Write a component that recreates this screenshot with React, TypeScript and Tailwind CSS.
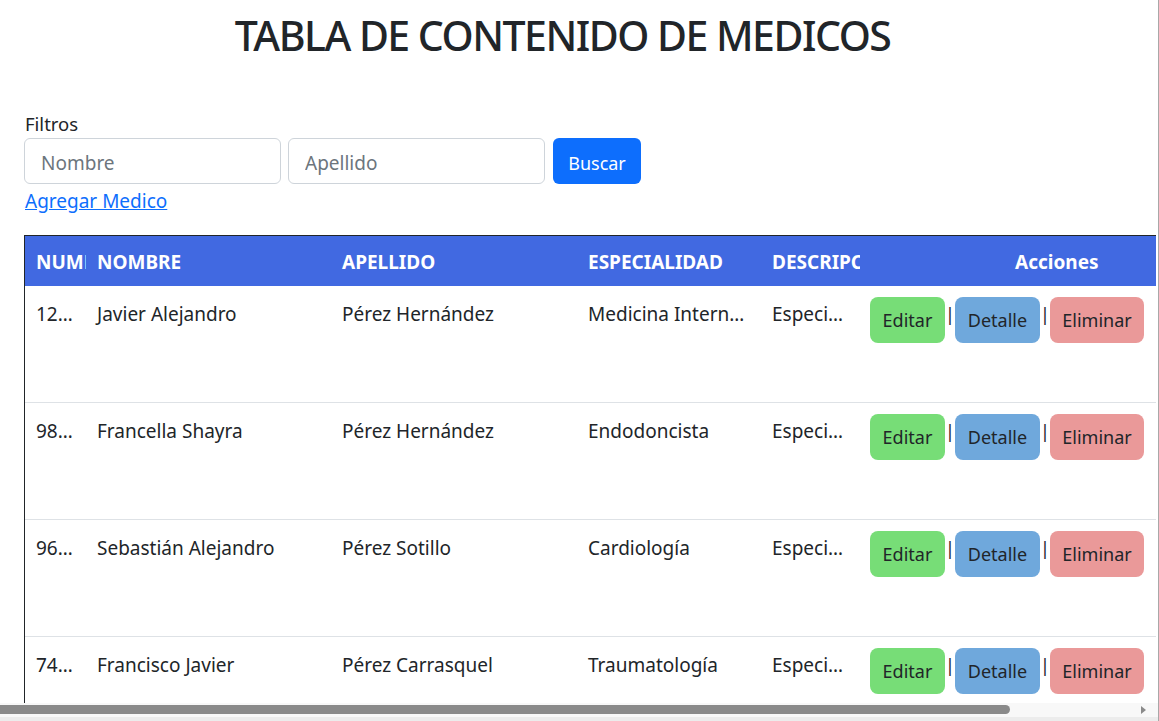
import React from 'react';

interface Medico {
  numero: string;
  nombre: string;
  apellido: string;
  especialidad: string;
  descripcion: string;
}

const MEDICOS: Medico[] = [
  { numero: '12345678', nombre: 'Javier Alejandro', apellido: 'Pérez Hernández', especialidad: 'Medicina Interna General', descripcion: 'Especialista en medicina interna' },
  { numero: '98765432', nombre: 'Francella Shayra', apellido: 'Pérez Hernández', especialidad: 'Endodoncista', descripcion: 'Especialista en endodoncia' },
  { numero: '96325874', nombre: 'Sebastián Alejandro', apellido: 'Pérez Sotillo', especialidad: 'Cardiología', descripcion: 'Especialista en cardiología' },
  { numero: '74125896', nombre: 'Francisco Javier', apellido: 'Pérez Carrasquel', especialidad: 'Traumatología', descripcion: 'Especialista en traumatología' },
];

const font = { fontFamily: '"Noto Sans", "Open Sans", sans-serif' };

export default function App() {
  return (
    <div className="relative w-[1159px] h-[721px] overflow-hidden bg-white border-r border-[#a8a8a8] text-[#212529]" style={font}>
      <div className="w-[1156px] h-[703px] overflow-hidden">
        {/* Title */}
        <h1 className="w-[1125px] pt-[9px] text-center text-[41px] leading-[52px] font-medium tracking-[-1.5px]">
          TABLA DE CONTENIDO DE MEDICOS
        </h1>

        {/* Filters */}
        <div className="pl-[24px] mt-[49px]">
          <div className="text-[18.5px] leading-[26px] pl-px pt-px h-[26px]">Filtros</div>
          <div className="flex items-center gap-[7px] mt-[2px]">
            <input
              type="text"
              placeholder="Nombre"
              className="w-[257px] h-[46px] rounded-[6px] border border-[#ced4da] px-[16px] pt-[4px] text-[19px] placeholder-[#6c757d] outline-none"
            />
            <input
              type="text"
              placeholder="Apellido"
              className="w-[257px] h-[46px] rounded-[6px] border border-[#ced4da] px-[16px] pt-[4px] text-[19px] placeholder-[#6c757d] outline-none"
            />
            <button className="ml-px w-[88px] h-[46px] rounded-[6px] bg-[#0d6efd] text-white text-[18px] pt-[4px]">
              Buscar
            </button>
          </div>
          <a href="#" className="inline-block mt-[4px] pl-px text-[19px] leading-[26px] text-[#0d6efd] underline">
            Agregar Medico
          </a>
        </div>

        {/* Table */}
        <div className="ml-[24px] mt-[21px] w-[1240px] border-t border-l border-[#212529]">
          <div className="flex h-[50px] items-center pt-[2px] bg-[#4169e1] text-white font-bold text-[19px] whitespace-nowrap">
            <div className="w-[61px] pl-[11px] overflow-hidden">NUMERO</div>
            <div className="w-[245px] pl-[11px] overflow-hidden">NOMBRE</div>
            <div className="w-[246px] pl-[11px] overflow-hidden">APELLIDO</div>
            <div className="w-[184px] pl-[11px] overflow-hidden">ESPECIALIDAD</div>
            <div className="w-[99px] pl-[11px] overflow-hidden">DESCRIPCION</div>
            <div className="pl-[155px]">Acciones</div>
          </div>
          {MEDICOS.map((m) => (
            <div key={m.numero} className="flex h-[117px] border-b border-[#dee2e6] text-[19px] leading-[26px]">
              <div className="w-[61px] px-[11px] pt-[15px] truncate">{m.numero}</div>
              <div className="w-[245px] px-[11px] pt-[15px] truncate">{m.nombre}</div>
              <div className="w-[246px] px-[11px] pt-[15px] truncate">{m.apellido}</div>
              <div className="w-[184px] px-[11px] pt-[15px] truncate">{m.especialidad}</div>
              <div className="w-[99px] px-[11px] pt-[15px] truncate">{m.descripcion}</div>
              <div className="flex items-start pt-[11px] pl-[10px] text-[#212529]">
                <button className="h-[46px] w-[75px] rounded-[8px] bg-[#77dd77] text-[18px]">Editar</button>
                <span className="w-[10px] mt-[5px] text-center text-[18px] leading-[24px] text-[#1a1a2e]">|</span>
                <button className="h-[46px] w-[85px] rounded-[8px] bg-[#6fa8dc] text-[18px]">Detalle</button>
                <span className="w-[10px] mt-[5px] text-center text-[18px] leading-[24px] text-[#1a1a2e]">|</span>
                <button className="h-[46px] w-[94px] rounded-[8px] bg-[#ea9999] text-[18px]">Eliminar</button>
              </div>
            </div>
          ))}
        </div>
      </div>

      {/* Horizontal scrollbar */}
      <div className="absolute left-0 bottom-0 w-[1158px] h-[18px] bg-[#f8f8f8] border-b-[4px] border-[#ececec]">
        <div className="absolute left-0 top-[2px] w-[1010px] h-[9px] bg-[#8a8a8a] rounded-r-full" />
        <svg className="absolute left-[1140px] top-[2px]" width="8" height="10" viewBox="0 0 8 10">
          <path d="M1 1 L6 5 L1 9 Z" fill="#8a8a8a" />
        </svg>
      </div>
    </div>
  );
}
